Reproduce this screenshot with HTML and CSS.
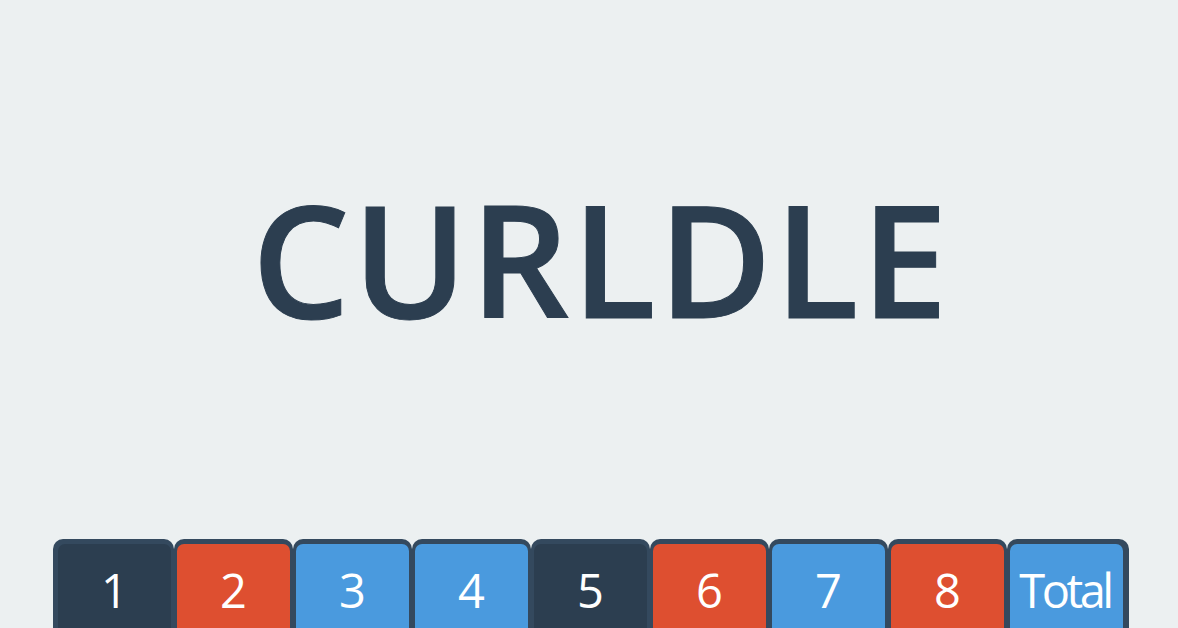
FILE: index.html
```html
<!DOCTYPE html>
<html lang="en">
<head>
<meta charset="utf-8">
<title>Curldle</title>
<link rel="stylesheet" href="styles.css">
</head>
<body>
<main class="page">
  <h1 class="title">CURLDLE</h1>
  <div class="subtitle" aria-hidden="true"></div>
  <nav class="tabs">
    <div class="tab first"><div class="tab-inner dark">1</div></div>
    <div class="tab"><div class="tab-inner red">2</div></div>
    <div class="tab"><div class="tab-inner blue">3</div></div>
    <div class="tab"><div class="tab-inner blue">4</div></div>
    <div class="tab"><div class="tab-inner dark">5</div></div>
    <div class="tab"><div class="tab-inner red">6</div></div>
    <div class="tab"><div class="tab-inner blue">7</div></div>
    <div class="tab"><div class="tab-inner red">8</div></div>
    <div class="tab last"><div class="tab-inner blue total">Total</div></div>
  </nav>
</main>
</body>
</html>
```
FILE: styles.css
```css
html, body {
  margin: 0;
  padding: 0;
}
body {
  background: #ecf0f1;
  width: 1178px;
  height: 628px;
  overflow: hidden;
  font-family: "Open Sans", "Noto Sans", sans-serif;
}
.page {
  display: flex;
  flex-direction: column;
}
.title {
  margin: 0;
  padding: 179px 0 0 24px;
  font-family: "Open Sans", sans-serif;
  font-weight: 600;
  font-size: 155px;
  line-height: 158px;
  color: #2c3e50;
  text-align: center;
  letter-spacing: 2.5px;
  -webkit-text-stroke: 1px #2c3e50;
}
.subtitle {
  margin-top: 48px;
  height: 70px;
}
.tabs {
  margin-top: 84px;
  display: flex;
  justify-content: center;
  padding-left: 4px;
}
.tab {
  background: #34495e;
  padding: 5px 3px 0 3px;
  border-radius: 10px 10px 0 0;
  height: 89px;
  box-sizing: border-box;
}
.tab.first {
  padding-left: 5px;
}
.tab.last {
  padding-right: 6px;
}
.tab-inner {
  width: 113px;
  height: 100%;
  box-sizing: border-box;
  padding-top: 14px;
  border-radius: 7px 7px 0 0;
  color: #ffffff;
  font-size: 47px;
  line-height: 64px;
  text-align: center;
}
.tab-inner.dark {
  background: #2c3e50;
}
.tab-inner.red {
  background: #de4f30;
}
.tab-inner.blue {
  background: #4a9ade;
}
.tab-inner.total {
  letter-spacing: -3.5px;
  text-indent: -3px;
}
```
